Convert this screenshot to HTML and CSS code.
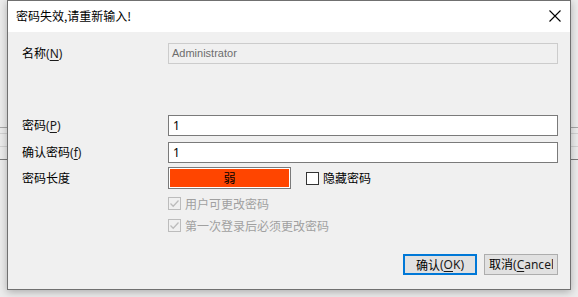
FILE: index.html
```html
<!DOCTYPE html>
<html lang="zh-CN">
<head>
<meta charset="utf-8">
<title>密码失效</title>
<link rel="stylesheet" href="styles.css">
</head>
<body>
<div class="window">
  <div class="titlebar">
    <span class="title">密码失效,请重新输入!</span>
    <span class="close">
      <svg width="12" height="12" viewBox="0 0 12 12"><path d="M0.5 0.5 L11.5 11.5 M11.5 0.5 L0.5 11.5" stroke="#000" stroke-width="1.1" fill="none"/></svg>
    </span>
  </div>
  <div class="content">
    <div class="row row-name">
      <span class="label">名称<span class="mn">(<u>N</u>)</span></span>
      <div class="field field-disabled">Administrator</div>
    </div>
    <div class="row row-pwd">
      <span class="label">密码<span class="mn">(<u>P</u>)</span></span>
      <div class="field">1</div>
    </div>
    <div class="row row-confirm">
      <span class="label">确认密码<span class="mn">(<u>f</u>)</span></span>
      <div class="field">1</div>
    </div>
    <div class="row row-strength">
      <span class="label">密码长度</span>
      <div class="strength"><div class="strength-fill">弱</div></div>
      <label class="check check-hide"><span class="box"></span><span class="check-text">隐藏密码</span></label>
    </div>
    <div class="opt opt-first">
      <span class="box box-disabled"><svg width="11" height="11" viewBox="0 0 11 11"><path d="M1.5 5.5 L4.2 8.2 L9.5 2.5" stroke="#bcbcbc" stroke-width="1.3" fill="none"/></svg></span>
      <span class="opt-text">用户可更改密码</span>
    </div>
    <div class="opt opt-second">
      <span class="box box-disabled"><svg width="11" height="11" viewBox="0 0 11 11"><path d="M1.5 5.5 L4.2 8.2 L9.5 2.5" stroke="#bcbcbc" stroke-width="1.3" fill="none"/></svg></span>
      <span class="opt-text">第一次登录后必须更改密码</span>
    </div>
    <div class="buttons">
      <div class="btn btn-default">确认<span class="mn">(<u>O</u>K)</span></div>
      <div class="btn btn-cancel"><span class="btn-clip">取消<span class="mn">(<u>C</u>ancel)</span></span></div>
    </div>
  </div>
</div>
</body>
</html>
```
FILE: styles.css
```css
html, body {
  margin: 0;
  padding: 0;
}
body {
  width: 578px;
  height: 297px;
  overflow: hidden;
  background-color: #ececec;
  background-image:
    linear-gradient(to bottom, transparent 127px, #a8a8a8 127px, #a8a8a8 128px, transparent 128px),
    linear-gradient(to bottom, transparent 133px, #d2d2d2 133px, #d2d2d2 134px, transparent 134px),
    linear-gradient(to bottom, transparent 146px, #d2d2d2 146px, #d2d2d2 147px, transparent 147px),
    linear-gradient(to bottom, transparent 159px, #7a7a7a 159px, #7a7a7a 160px, transparent 160px);
  font-family: "Noto Sans CJK SC", "Noto Sans", sans-serif;
  font-size: 12px;
  color: #000;
}
.window {
  margin-left: 7px;
  width: 562px;
  height: 288px;
  border: 1px solid #707070;
  background: #f0f0f0;
  box-shadow: 0 2px 8px rgba(0, 0, 0, 0.28);
  display: flex;
  flex-direction: column;
}
.titlebar {
  height: 31px;
  background: #fff;
  display: flex;
  align-items: center;
  justify-content: space-between;
  padding-left: 8px;
  padding-right: 9px;
}
.title {
  font-size: 12px;
  line-height: 14px;
  margin-top: -1px;
}
.close {
  display: flex;
  margin-top: -1px;
}
.content {
  padding: 0 12px 0 14px;
  display: flex;
  flex-direction: column;
}
.row {
  display: flex;
  align-items: center;
  height: 21px;
}
.row-name { margin-top: 11px; }
.row-pwd { margin-top: 51px; }
.row-confirm { margin-top: 6px; }
.row-strength { margin-top: 4px; height: 22px; }
.label {
  width: 146px;
  flex: none;
  line-height: 14px;
}
.mn {
  font-family: "Noto Sans", "Liberation Sans", sans-serif;
  font-size: 12px;
  color: #1a1a1a;
}
.mn u {
  text-underline-offset: 2px;
}
.field {
  width: 390px;
  height: 21px;
  box-sizing: border-box;
  border: 1px solid #7a7a7a;
  background: #fff;
  padding-left: 4px;
  font-family: "Noto Sans", "Liberation Sans", sans-serif;
  font-size: 12px;
  line-height: 19px;
}
.field-disabled {
  border-color: #cccccc;
  background: #f0f0f0;
  color: #6d6d6d;
  font-family: "Liberation Sans", sans-serif;
  font-size: 11px;
  padding-left: 3px;
}
.strength {
  width: 123px;
  height: 22px;
  box-sizing: border-box;
  border: 1px solid #7a7a7a;
  padding: 1px;
  background: #fff;
}
.strength-fill {
  height: 100%;
  background: #ff4500;
  text-align: center;
  line-height: 18px;
  font-size: 12px;
}
.check {
  display: flex;
  align-items: center;
  margin-left: 15px;
}
.box {
  width: 13px;
  height: 13px;
  box-sizing: border-box;
  border: 1px solid #333;
  background: #fff;
  flex: none;
  display: flex;
  align-items: center;
  justify-content: center;
}
.check-text {
  margin-left: 4px;
  line-height: 14px;
}
.box-disabled {
  border-color: #bcbcbc;
  background: #f0f0f0;
}
.opt {
  display: flex;
  align-items: center;
  height: 13px;
  margin-left: 146px;
}
.opt-first { margin-top: 8px; }
.opt-second { margin-top: 9px; }
.opt-text {
  margin-left: 4px;
  color: #a0a0a0;
  line-height: 14px;
}
.buttons {
  display: flex;
  justify-content: flex-end;
  gap: 7px;
  margin-top: 22px;
}
.btn {
  width: 74px;
  height: 21px;
  box-sizing: border-box;
  background: #e1e1e1;
  border: 1px solid #adadad;
  display: flex;
  align-items: center;
  justify-content: center;
  white-space: nowrap;
  overflow: hidden;
  line-height: 14px;
}
.btn-default {
  border: 2px solid #0078d7;
}
.btn-cancel {
  justify-content: flex-start;
  padding-left: 4px;
}
.btn-clip {
  display: block;
  width: 64px;
  overflow: hidden;
  white-space: nowrap;
}
```
